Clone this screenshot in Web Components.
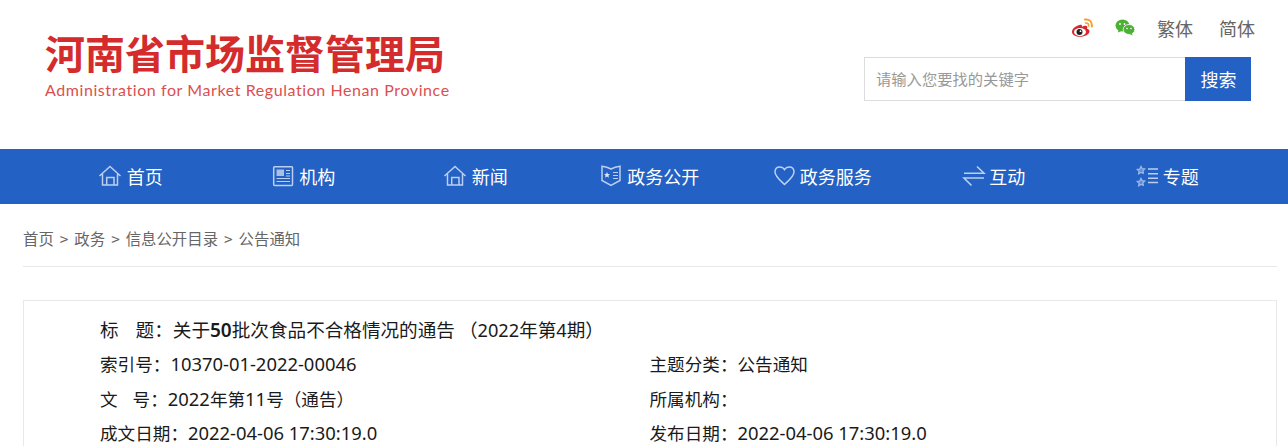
<!DOCTYPE html>
<html lang="zh-CN">
<head>
<meta charset="utf-8">
<title>河南省市场监督管理局</title>
<style>
  html, body { margin: 0; padding: 0; background: #fff; height: 446px; overflow: hidden; }
  body { font-family: "Noto Sans", "Noto Sans CJK SC", sans-serif; }
</style>
</head>
<body>
<site-header></site-header>
<main-nav>
  <nav-item icon="home">首页</nav-item>
  <nav-item icon="news">机构</nav-item>
  <nav-item icon="home">新闻</nav-item>
  <nav-item icon="book" wide>政务公开</nav-item>
  <nav-item icon="heart" wide>政务服务</nav-item>
  <nav-item icon="swap">互动</nav-item>
  <nav-item icon="list" wide>专题</nav-item>
</main-nav>
<bread-crumb>
  <a>首页</a><a>政务</a><a>信息公开目录</a><a>公告通知</a>
</bread-crumb>
<info-panel></info-panel>

<script>
// 页头：标志、社交图标、繁简切换、搜索框
class SiteHeader extends HTMLElement {
  constructor() {
    super();
    var shadow = this.attachShadow({mode: 'open'});
    shadow.innerHTML = `
      <style>
        :host { display: flex; justify-content: space-between; height: 149px; box-sizing: border-box; font-family: "Noto Sans CJK SC", sans-serif; }
        .logo { padding: 24px 0 0 45px; color: #d42c2c; }
        .cn { font-size: 40px; font-weight: 700; line-height: 56px; white-space: nowrap; }
        .en { font-family: Lato, sans-serif; font-size: 16px; line-height: 20px; letter-spacing: .58px; color: #dc4f4f; white-space: nowrap; }
        .side { width: 424px; display: flex; flex-direction: column; }
        .top { display: flex; align-items: center; height: 57px; padding-bottom: 2px; font-size: 18px; color: #666; box-sizing: border-box; }
        .top svg { display: block; }
        .weibo { margin-left: 207px; }
        .wechat { margin-left: 22px; }
        .fan { margin-left: 22px; }
        .jian { margin-left: 26px; }
        .search { display: flex; height: 44px; }
        .box { width: 321px; box-sizing: border-box; border: 1px solid #dcdcdc; border-right: 0; font-size: 15.3px; color: #999; line-height: 41px; padding-left: 11px; }
        .btn { width: 66px; padding-left: 1px; box-sizing: border-box; background: #2361c4; color: #fff; font-size: 18px; text-align: center; line-height: 44px; }
      </style>
      <div class="logo">
        <div class="cn">河南省市场监督管理局</div>
        <div class="en">Administration for Market Regulation Henan Province</div>
      </div>
      <div class="side">
        <div class="top">
          <svg class="weibo" width="22" height="19" viewBox="0 0 22 19">
            <path d="M8.500 7C4 8.300 1 11 1 14 1 17 5 18.800 9 18.800 14 18.800 18.500 16.300 18.500 13.300 18.500 11.700 17 11 16 10.800 16.700 9 16.200 7.800 14.500 7.800 13.300 7.800 12 8.300 11 8.800 11.300 7 10.300 6.500 8.500 7Z" fill="#d8262c"/>
            <ellipse cx="9" cy="14" rx="6" ry="4" fill="#fff"/>
            <circle cx="8.500" cy="14" r="3" fill="#222"/>
            <circle cx="9.500" cy="13.200" r=".9" fill="#fff"/>
            <path d="M14 1.500C18 .8 21.500 3.500 20.800 8.500" fill="none" stroke="#f0a030" stroke-width="2" stroke-linecap="round"/>
            <path d="M14.500 5C16.500 4.700 18 6 17.600 8" fill="none" stroke="#f0a030" stroke-width="1.600" stroke-linecap="round"/>
          </svg>
          <svg class="wechat" width="20" height="17" viewBox="0 0 20 17">
            <ellipse cx="7.500" cy="6.500" rx="7" ry="6" fill="#4cb034"/>
            <path d="M3.500 10.500L3 13.500 6.500 12Z" fill="#4cb034"/>
            <ellipse cx="14" cy="10.500" rx="5.800" ry="5" fill="#4cb034" stroke="#fff" stroke-width=".8"/>
            <path d="M16.800 14L17.500 16.500 14.500 15Z" fill="#4cb034"/>
            <circle cx="5" cy="5" r=".9" fill="#fff"/><circle cx="9.500" cy="5" r=".9" fill="#fff"/>
            <circle cx="12" cy="9.500" r=".8" fill="#fff"/><circle cx="16" cy="9.500" r=".8" fill="#fff"/>
          </svg>
          <span class="fan">繁体</span>
          <span class="jian">简体</span>
        </div>
        <div class="search">
          <div class="box">请输入您要找的关键字</div>
          <div class="btn">搜索</div>
        </div>
      </div>
    `;
  }
}

// 导航条
class MainNav extends HTMLElement {
  constructor() {
    super();
    var shadow = this.attachShadow({mode: 'open'});
    shadow.innerHTML = `
      <style>
        :host { display: grid; grid-template-columns: repeat(7, 172.5px); height: 55px; padding-left: 44.5px; background: #2361c4; }
      </style>
      <slot></slot>
    `;
  }
}

const NAV_ICONS = {
  home: '<path d="M.5 11L11 1.500 21.500 11M3.500 9V20H18.500V9M7.700 20V12.500H15V20"/>',
  news: '<rect x="2.700" y="1.800" width="18.800" height="18.600" rx=".8"/><path d="M15 5.500h4M15 8.500h4M15 11h4M5.500 13.500h13.500M5.500 16.500h13.500" stroke-width="1.100"/><rect x="5.500" y="4.500" width="7.500" height="6.500" fill="#a9c0e6" stroke="none"/>',
  book: '<path d="M5 1.200Q10 1.700 14 4 18 1.700 23 1.200V15.500L14 20.500 5 15.500Z"/><path d="M16 7.500h5M16 10.500h5M16 13.500h5" stroke-width="1.200"/><path d="M10 7l.9 2 2.100.2-1.600 1.400.5 2.100-1.900-1.100-1.900 1.100.5-2.100-1.600-1.400 2.100-.2Z" fill="#dbe5f6" stroke="none"/>',
  heart: '<path d="M14.500 19.500C11 16 5 11.500 5 7 5 4 7 2 9.800 2 11.800 2 13.500 3 14.500 4.600 15.500 3 17.200 2 19.200 2 22 2 24 4 24 7 24 11.500 18 16 14.500 19.500Z"/>',
  swap: '<path d="M3 8.300H23L16 1.500M23 13H3L10.500 20.500" stroke-width="1.600"/>',
  list: '<g fill="#5d8ad4" stroke="#9ab8e6" stroke-width="1.300"><path d="M8 1.500l1.200 2.100 2.500.4-1.800 1.800.4 2.400L8 7.500 5.700 8.700l.4-2.400L4.300 4.500l2.500-.4Z"/><path d="M8 13.500l1.200 2.100 2.500.4-1.800 1.800.4 2.400L8 19.500l-2.300 1.200.4-2.400-1.800-1.800 2.500-.4Z"/></g><path d="M15 4h10M15 8.800h10M15 13.200h10M15 17.500h10" stroke-width="1.500"/>'
};

class NavItem extends HTMLElement {
  constructor() {
    super();
    var shadow = this.attachShadow({mode: 'open'});
    var w = this.hasAttribute('wide') ? 24 : 22;
    shadow.innerHTML = `
      <style>
        :host { display: flex; align-items: center; justify-content: center; gap: 6px; padding-bottom: 2px; box-sizing: border-box; color: #fff; font-family: "Noto Sans CJK SC", sans-serif; font-size: 18px; }
        svg { display: block; overflow: visible; fill: none; stroke: #bccfee; stroke-width: 1.500; }
      </style>
      <svg width="${w}" height="22" viewBox="0 0 ${w} 22">${NAV_ICONS[this.getAttribute('icon')]}</svg>
      <slot></slot>
    `;
  }
}

// 面包屑
class BreadCrumb extends HTMLElement {
  constructor() {
    super();
    var shadow = this.attachShadow({mode: 'open'});
    shadow.innerHTML = `
      <style>
        :host { display: block; margin: 0 11px 0 23px; height: 62px; line-height: 69px; border-bottom: 1px solid #e8e8e8; font-family: "Noto Sans CJK SC", sans-serif; font-size: 15.400px; color: #666; }
        ::slotted(a:not(:first-child))::before { content: ">"; padding: 0 6px; }
      </style>
      <slot></slot>
    `;
  }
}

// 信息公开内容
class InfoPanel extends HTMLElement {
  constructor() {
    super();
    var shadow = this.attachShadow({mode: 'open'});
    shadow.innerHTML = `
      <style>
        :host { display: block; margin: 33px 11px 0 23px; height: 146px; overflow: hidden; box-sizing: border-box; padding: 12px 0 0 76px; border: 1px solid #e8e8e8; border-bottom: 0; font-family: "Noto Sans", "Noto Sans CJK SC", sans-serif; font-size: 17.6px; color: #1a1a1a; }
        .rows { display: grid; grid-template-columns: 549.500px 1fr; grid-auto-rows: 34.400px; line-height: 34.400px; white-space: nowrap; }
        .full { grid-column: 1 / 3; font-size: 18.600px; }
        .gap { display: inline-block; width: 15px; }
        .full .gap { width: 17px; }
        .n { font-size: 18.400px; }
        .full .n { font-size: 18.200px; }
        .paren { margin-left: 4px; }
        b { font-weight: 600; font-size: 19px; }
      </style>
      <div class="rows">
        <div class="full">标<span class="gap"></span>题：关于<b>50</b>批次食品不合格情况的通告<span class="paren">（<span class="n">2022</span>年第<span class="n">4</span>期）</span></div>
        <div>索引号：<span class="n">10370-01-2022-00046</span></div><div>主题分类：公告通知</div>
        <div>文<span class="gap"></span>号：<span class="n">2022</span>年第<span class="n">11</span>号（通告）</div><div>所属机构：</div>
        <div>成文日期：<span class="n">2022-04-06 17:30:19.0</span></div><div>发布日期：<span class="n">2022-04-06 17:30:19.0</span></div>
      </div>
    `;
  }
}

customElements.define('site-header', SiteHeader);
customElements.define('main-nav', MainNav);
customElements.define('nav-item', NavItem);
customElements.define('bread-crumb', BreadCrumb);
customElements.define('info-panel', InfoPanel);
</script>
</body>
</html>
